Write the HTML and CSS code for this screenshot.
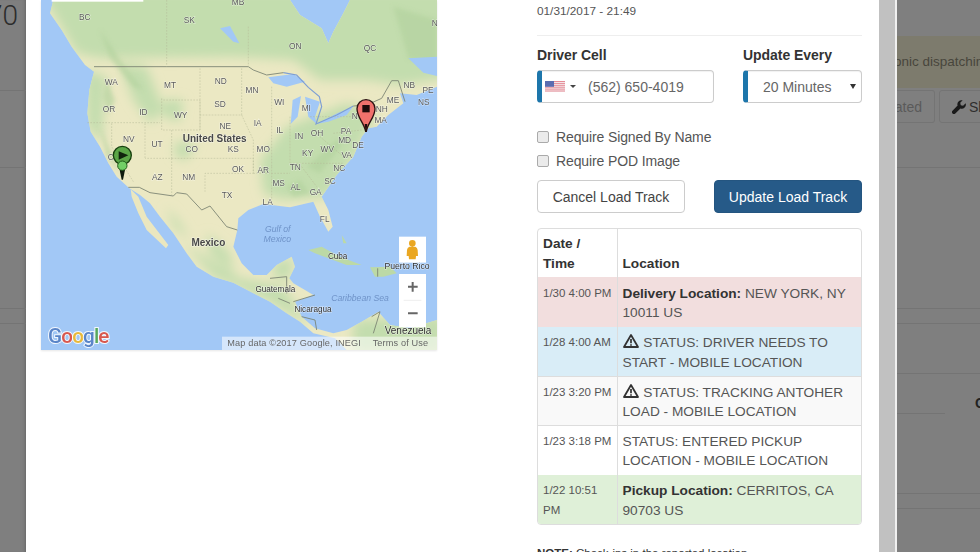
FILE: index.html
```html
<!DOCTYPE html>
<html lang="en">
<head>
<meta charset="utf-8">
<title>Load Track</title>
<link rel="stylesheet" href="styles.css">
</head>
<body>
<div class="page">
  <aside class="back back-left">
    <div class="big-num">70</div>
    <div class="rule r1"></div>
    <div class="rule r2"></div>
    <div class="rule r3"></div>
    <div class="rule r4"></div>
  </aside>

  <main class="modal">
    <section class="map">
      <svg class="map-svg" viewBox="123 0 1188 1050" width="396" height="350" aria-label="Map">
        <defs>
          <filter id="soft" x="-20%" y="-20%" width="140%" height="140%"><feGaussianBlur stdDeviation="6"/></filter>
          <filter id="softer" x="-20%" y="-20%" width="140%" height="140%"><feGaussianBlur stdDeviation="16"/></filter>
          <path id="land-shape" d="M160 0 L150 40 L185 90 L215 140 L255 195 L282 215 L268 270 L262 340 L272 395 L300 440 L325 490 L350 530 L388 565 L420 585 L450 610 L480 650 L520 700 L560 760 L590 800 L640 830 L700 848 L760 880 L810 905 L860 940 L900 965 L940 1000 L1005 1015 L1040 1050 L1311 1050 L1311 960 L1230 985 L1170 975 L1135 935 L1085 965 L1040 990 L1000 1000 L945 985 L905 950 L885 905 L940 885 L915 870 L880 850 L868 835 L885 800 L875 770 L830 795 L800 825 L760 825 L725 790 L700 740 L712 690 L715 655 L745 630 L790 612 L870 622 L940 605 L960 650 L985 695 L998 680 L985 630 L965 590 L1010 525 L1060 470 L1085 410 L1105 385 L1130 380 L1165 345 L1210 310 L1200 280 L1250 285 L1311 260 L1311 0 L1050 0 L1030 40 L1000 95 L985 130 L965 85 L900 45 L870 0 Z"/>
          <clipPath id="landclip"><use href="#land-shape"/></clipPath>
        </defs>
        <rect class="sea" x="123" y="0" width="1188" height="1050"/>
        <use href="#land-shape" class="land"/>
        <g clip-path="url(#landclip)">
          <g class="greens" filter="url(#softer)">
            <path d="M120 -30 H1340 V235 L1200 255 L1100 240 L960 240 L880 180 L700 170 L300 175 L230 160 Z"/>
            <path d="M360 190 L440 200 L490 330 L450 370 L400 300 Z"/>
            <path d="M255 210 L320 230 L310 350 L305 430 L262 380 Z"/>
            <path d="M780 480 L860 380 L1040 310 L1130 340 L1060 480 L985 590 L850 600 L790 580 Z"/>
            <path d="M490 300 L550 300 L540 365 L490 350 Z"/>
            <path d="M525 425 L590 430 L560 480 L525 470 Z"/>
            <path d="M550 730 L720 835 L850 860 L930 980 L800 900 L640 830 Z"/>
            <path d="M820 790 L880 770 L870 840 L820 830 Z"/>
            <path d="M1060 960 L1330 950 V1060 L1060 1060 Z"/>
            <path d="M500 620 L540 670 L570 720 L520 680 Z"/>
            <path d="M620 700 L690 760 L700 820 L630 760 Z"/>
          </g>
          <g class="mtn" filter="url(#soft)">
            <path d="M300 90 L355 170 L430 270 L400 260 L330 175 Z"/>
            <path d="M1180 20 L1311 60 L1311 190 L1225 175 Z"/>
            <path d="M320 240 L345 300 L325 340 L310 290 Z"/>
            <path d="M920 500 L1010 420 L1030 430 L960 520 Z"/>
            <path d="M860 560 L900 540 L930 580 L880 590 Z"/>
            <path d="M300 380 L335 460 L360 520 L320 470 Z"/>
          </g>
        </g>
        <!-- Baja and islands -->
        <path class="land-plain" d="M392 568 L415 590 L440 650 L505 735 L498 745 L440 690 L415 640 L395 590 Z"/>
        <path class="land-green" d="M925 750 L965 740 L1020 770 L1085 795 L1040 795 L985 775 L945 760 Z"/>
        <path class="land-green" d="M1110 802 L1170 800 L1190 820 L1150 830 L1125 830 Z"/>
        <path class="land-green" d="M1025 705 L1040 730 L1030 730 Z"/>
        <!-- lakes -->
        <path class="sea" d="M805 232 L880 222 L915 245 L860 260 L820 250 Z"/>
        <path class="sea" d="M878 300 L903 288 L893 350 L872 372 Z"/>
        <path class="sea" d="M915 290 L960 305 L945 350 L950 372 L925 350 Z"/>
        <path class="sea" d="M948 372 L1015 338 L1058 322 L1040 345 L985 365 Z"/>
        <path class="sea" d="M660 85 L690 78 L718 130 L700 125 Z"/>
        <path class="sea" d="M1225 175 L1311 170 L1311 228 L1270 218 Z"/>
        <!-- water borders -->
        <path class="water-border" d="M850 218 L890 225 L925 262 L958 290 L965 320 L948 372 L1010 345 L1060 318"/>
        <!-- land borders -->
        <g class="border">
          <path d="M282 200 H745 L760 210 L800 225 L850 218"/>
          <path d="M1060 318 L1100 315 L1145 295 L1175 242 L1195 242 L1215 305"/>
          <path d="M385 562 L418 562 L450 578 L520 588 L530 578 L560 582 L605 630 L630 618 L680 680 L712 690"/>
          <path d="M810 835 L860 830 L860 880 M835 895 L870 910 M880 905 L945 885 M905 950 L945 960 L950 990 M1115 950 L1140 935 L1120 1000 M1133 805 V830"/>
        </g>
        <g class="state">
          <path d="M500 0 V200 M745 80 V200 M262 368 H480 M335 370 V440 L400 545 M435 370 V475 M485 295 V390 H600 V300 H485 M515 390 V475 H435 M600 205 V390 M515 475 H760 V520 H615 V575 M515 475 V585 M725 205 V345 H600 M725 345 L760 420 V520 M815 260 V500 M815 500 V600 M870 350 V490 M760 520 H870 M870 490 H1030 M930 350 H1070 M1000 400 L1085 390 M905 500 L950 560 M960 410 L1030 470"/>
        </g>
        <!-- labels -->
        <g class="lbl">
          <text x="254" y="61">BC</text><text x="568" y="70">SK</text><text x="714" y="14">MB</text><text x="886" y="146">ON</text><text x="1110" y="152">QC</text><text x="1304" y="78">N</text>
          <text x="334" y="254">WA</text><text x="510" y="263">MT</text><text x="662" y="251">ND</text><text x="756" y="280">MN</text><text x="838" y="316">WI</text><text x="919" y="334">MI</text>
          <text x="327" y="335">OR</text><text x="430" y="345">ID</text><text x="542" y="355">WY</text><text x="660" y="321">SD</text><text x="676" y="387">NE</text><text x="773" y="377">IA</text><text x="839" y="400">IL</text><text x="897" y="417">IN</text><text x="951" y="408">OH</text><text x="1038" y="402">PA</text>
          <text x="386" y="426">NV</text><text x="471" y="440">UT</text><text x="575" y="455">CO</text><text x="700" y="455">KS</text><text x="790" y="457">MO</text><text x="923" y="469">KY</text><text x="982" y="455">WV</text><text x="1040" y="475">VA</text><text x="1034" y="428">MD</text><text x="1074" y="443">DE</text>
          <text x="472" y="540">AZ</text><text x="566" y="539">NM</text><text x="714" y="516">OK</text><text x="790" y="519">AR</text><text x="886" y="510">TN</text><text x="1018" y="513">NC</text><text x="990" y="553">SC</text>
          <text x="836" y="559">MS</text><text x="887" y="571">AL</text><text x="947" y="586">GA</text><text x="803" y="615">LA</text><text x="681" y="595">TX</text><text x="974" y="667">FL</text>
          <text x="1179" y="310">ME</text><text x="1228" y="263">NB</text><text x="1284" y="280">PE</text><text x="1271" y="315">NS</text><text x="1142" y="370">MA</text><text x="1145" y="335">NH</text><text x="1064" y="356">N</text><text x="332" y="481">C</text>
        </g>
        <g class="lbl-big">
          <text class="country" x="644" y="427">United States</text>
          <text class="country" x="625" y="738">Mexico</text>
          <text x="1013" y="777">Cuba</text>
          <text class="pr" x="1221" y="806">Puerto Rico</text>
          <text x="826" y="875">Guatemala</text>
          <text x="939" y="937">Nicaragua</text>
          <text class="ven" x="1224" y="1002">Venezuela</text>
        </g>
        <g class="lbl-sea">
          <text x="833" y="696">Gulf of</text>
          <text x="832" y="725">Mexico</text>
          <text x="1080" y="902">Caribbean Sea</text>
        </g>
        <!-- green pins -->
        <circle class="pin-g" cx="367" cy="466" r="27"/>
        <path class="glyph" d="M356 454 L385 466 L356 479 Z"/>
        <path class="pin-tail" d="M359 510 L375 510 L369 539 H365 Z"/>
        <circle class="pin-small" cx="367" cy="497" r="14"/>
        <!-- red pin -->
        <path class="pin-r" d="M1097 394 C1092 368 1071 352 1071 326 A27 27 0 0 1 1125 326 C1125 352 1103 368 1099 394 Z"/>
        <path class="pin-tip" d="M1094 372 H1102 L1099 396 H1097 Z"/>
        <rect class="glyph-r" x="1087" y="315" width="22" height="22"/>
        <!-- attribution -->
        <rect class="attr" x="666" y="1010" width="645" height="40"/>
        <text class="attr-t" x="682" y="1038">Map data ©2017 Google, INEGI</text>
        <text class="attr-t" x="1118" y="1038">Terms of Use</text>
        <!-- logo -->
        <text class="logo" x="144" y="1030"><tspan class="g-b">G</tspan><tspan class="g-r">o</tspan><tspan class="g-y">o</tspan><tspan class="g-b">g</tspan><tspan class="g-g">l</tspan><tspan class="g-r">e</tspan></text>
        <!-- top control -->
        <rect class="ctl" x="155" y="-10" width="275" height="15"/>
        <!-- pegman -->
        <rect class="ctl" x="1197" y="710" width="81" height="78"/>
        <path class="peg" d="M1237 720 A10 10 0 0 1 1237 740 A10 10 0 0 1 1237 720 M1228 740 H1246 Q1252 742 1253 750 L1254 768 H1248 L1247 778 H1227 L1226 768 H1220 L1221 750 Q1222 742 1228 740 Z"/>
        <!-- zoom -->
        <rect class="ctl" x="1197" y="822" width="81" height="160"/>
        <path class="sep" d="M1211 901 H1264"/>
        <path class="zoomi" d="M1224 860 H1253 M1238 846 V875 M1224 940 H1253"/>
      </svg>
    </section>

    <section class="form">
      <div class="stamp">01/31/2017 - 21:49</div>
      <hr class="divider">
      <div class="fields">
        <div class="field field-cell">
          <div class="field-label">Driver Cell</div>
          <div class="control">
            <svg class="flag" viewBox="0 0 20 11" width="20" height="11" aria-hidden="true">
              <rect width="20" height="11" fill="#e58b95"/>
              <path d="M0 1.6H20M0 3.7H20M0 5.8H20M0 7.9H20M0 10H20" stroke="#f6eef0" stroke-width="1"/>
              <rect width="9" height="5.8" fill="#5a6cb0"/>
            </svg>
            <span class="caret"></span>
            <span class="phone">(562) 650-4019</span>
          </div>
        </div>
        <div class="field field-every">
          <div class="field-label">Update Every</div>
          <div class="control control-select">
            <span class="select-val">20 Minutes</span>
            <span class="select-arrow"></span>
          </div>
        </div>
      </div>
      <label class="check"><span class="box"></span>Require Signed By Name</label>
      <label class="check"><span class="box"></span>Require POD Image</label>
      <div class="actions">
        <button class="btn btn-default">Cancel Load Track</button>
        <button class="btn btn-primary">Update Load Track</button>
      </div>
      <div class="table-wrap">
        <table class="track">
          <thead>
            <tr><th class="c-date">Date / Time</th><th>Location</th></tr>
          </thead>
          <tbody>
            <tr class="danger"><td class="c-date">1/30 4:00 PM</td><td><b>Delivery Location:</b> NEW YORK, NY 10011 US</td></tr>
            <tr class="info"><td class="c-date">1/28 4:00 AM</td><td><svg class="warn" viewBox="0 0 16 14" width="16" height="14" aria-hidden="true"><path d="M8 1 L15 13 H1 Z" fill="none" stroke="#333" stroke-width="1.8" stroke-linejoin="round"/><path d="M8 5 V9.2 M8 10.2 V11.8" stroke="#333" stroke-width="1.7"/></svg> STATUS: DRIVER NEEDS TO START - MOBILE LOCATION</td></tr>
            <tr class="muted"><td class="c-date">1/23 3:20 PM</td><td><svg class="warn" viewBox="0 0 16 14" width="16" height="14" aria-hidden="true"><path d="M8 1 L15 13 H1 Z" fill="none" stroke="#333" stroke-width="1.8" stroke-linejoin="round"/><path d="M8 5 V9.2 M8 10.2 V11.8" stroke="#333" stroke-width="1.7"/></svg> STATUS: TRACKING ANTOHER LOAD - MOBILE LOCATION</td></tr>
            <tr><td class="c-date">1/23 3:18 PM</td><td>STATUS: ENTERED PICKUP LOCATION - MOBILE LOCATION</td></tr>
            <tr class="success"><td class="c-date">1/22 10:51 PM</td><td><b>Pickup Location:</b> CERRITOS, CA 90703 US</td></tr>
          </tbody>
        </table>
      </div>
      <p class="note"><b>NOTE:</b> Check-ins in the reported location</p>
    </section>
  </main>

  <div class="scroll"></div>

  <aside class="back back-right">
    <div class="alert">onic dispatching</div>
    <div class="tools">
      <span class="tool tool-a">ated</span>
      <span class="tool tool-b">
        <svg class="wrench" viewBox="0 0 16 16" width="14" height="14" aria-hidden="true"><path d="M15.6 3.7 L12.7 6.5 L10 5.9 L9.4 3.2 L12.2 .4 A4.7 4.7 0 0 0 6.4 6.4 L.6 12.2 A2.2 2.2 0 0 0 3.8 15.4 L9.6 9.6 A4.7 4.7 0 0 0 15.6 3.7 Z" fill="#1a1a1a"/></svg>
        Show
      </span>
    </div>
    <div class="rule rr1"></div>
    <div class="rule rr2"></div>
    <div class="rule rr3"></div>
    <div class="rule rr4"></div>
    <div class="mark">C</div>
    <div class="rule rr5"></div>
    <div class="rule rr6"></div>
    <div class="rule rr7"></div>
  </aside>
</div>
</body>
</html>
```
FILE: styles.css
```css
* { box-sizing: border-box; }
html, body { margin: 0; padding: 0; }
body {
  width: 980px;
  height: 552px;
  overflow: hidden;
  font-family: "Liberation Sans", Arial, sans-serif;
  font-size: 14px;
  color: #333;
  background: #7f7f7f;
}
.page {
  display: grid;
  grid-template-columns: 26px 853px 18px 83px;
  height: 552px;
  overflow: hidden;
}

/* dimmed page behind the modal */
.back { overflow: hidden; background: #7f7f7f; height: 552px; min-width: 0; }
.rule { height: 1px; background: #747474; }
.back-left { box-shadow: inset -3px 0 3px -2px #666; }
.big-num {
  height: 90px;
  margin-left: -13px;
  padding-top: 1px;
  font-family: Roboto, "Liberation Sans", sans-serif;
  font-weight: 300;
  font-size: 28px;
  line-height: 30px;
  color: #2c2c2c;
  white-space: nowrap;
}
.back-left .r2 { margin-top: 76px; }
.back-left .r3 { margin-top: 140px; }
.back-left .r4 { margin-top: 14px; }

.alert {
  height: 52px;
  margin-top: 36px;
  padding-top: 17px;
  margin-left: -3px;
  background: #7d7b6d;
  color: #48463c;
  white-space: nowrap;
  font-size: 13.5px;
  line-height: 17px;
  overflow: hidden;
}
.tools { display: flex; height: 33px; margin-top: 2px; margin-left: -12px; gap: 4px; }
.tool {
  display: flex;
  align-items: center;
  gap: 3px;
  height: 33px;
  flex: none;
  border: 1px solid #747474;
  border-radius: 3px;
  padding: 0 12px 0 0;
  color: #5a5a5a;
  white-space: nowrap;
}
.tool-a { width: 50px; justify-content: flex-end; border-left: 0; border-radius: 0 3px 3px 0; }
.tool-b { width: 80px; color: #2e2e2e; padding-left: 12px; }
.rr1 { margin-top: 44px; }
.rr2 { margin-top: 140px; }
.rr3 { margin-top: 14px; }
.rr4 { margin-top: 49px; }
.mark {
  margin-top: 20px;
  margin-left: 78px;
  height: 19px;
  line-height: 19px;
  font-size: 14px;
  font-weight: bold;
  color: #222;
}
.rr5 { width: 48px; }
.rr6 { margin-top: 79px; }
.rr7 { margin-top: 14px; }

/* modal */
.modal {
  display: flex;
  align-items: flex-start;
  background: #fff;
  height: 552px;
  padding-left: 15px;
  overflow: hidden;
}
.map {
  flex: 0 0 396px;
  height: 350px;
  box-shadow: 0 1px 2px rgba(0,0,0,.1);
}
.map-svg { display: block; filter: blur(.35px); }
.sea { fill: #a2c8f6; }
.land { fill: #ebe8c3; }
.land-plain { fill: #ebe7bf; }
.land-green { fill: #bcd9a6; }
.greens path { fill: #c3ddae; }
.mtn path { fill: #b0d09c; opacity: .6; }
.water-border { fill: none; stroke: #7d9ed4; stroke-width: 3.5; }
.border path { fill: none; stroke: #7a8272; stroke-width: 2.6; }
.state path { fill: none; stroke: #b4b896; stroke-width: 1.5; stroke-dasharray: 5 4; }
.lbl text {
  font: 25px "Liberation Sans", Arial, sans-serif;
  fill: #5a5a5a;
  text-anchor: middle;
  paint-order: stroke;
  stroke: rgba(255,255,255,.5);
  stroke-width: 3px;
}
.lbl-big text {
  font: 24.5px "Liberation Sans", Arial, sans-serif;
  fill: #2f2f2f;
  text-anchor: middle;
  paint-order: stroke;
  stroke: rgba(255,255,255,.6);
  stroke-width: 3px;
}
.lbl-big .country { font-size: 30px; font-weight: bold; fill: #484848; }
.lbl-big .pr { font-size: 26px; }
.lbl-big .ven { font-size: 30px; }
.lbl-sea text {
  font: italic 26px "Liberation Sans", Arial, sans-serif;
  fill: #6f93c8;
  text-anchor: middle;
}
.pin-g { fill: #5ba647; stroke: #17400f; stroke-width: 4; }
.glyph { fill: #10240d; }
.pin-tail { fill: #0e1a0c; }
.pin-small { fill: #72cf66; stroke: #1f5a18; stroke-width: 3; }
.pin-r { fill: #f0716c; stroke: #2c1212; stroke-width: 4; }
.pin-tip { fill: #1e0b0b; }
.glyph-r { fill: #1e0b0b; }
.attr { fill: rgba(255,255,255,.55); }
.attr-t { font: 27.5px "Liberation Sans", Arial, sans-serif; fill: #666; letter-spacing: .4px; }
.logo {
  font: 500 62px Roboto, "Liberation Sans", sans-serif;
  paint-order: stroke;
  stroke: rgba(255,255,255,.85);
  stroke-width: 6px;
  letter-spacing: -2.5px;
}
.g-b { fill: #5a85c8; }
.g-r { fill: #d8584f; }
.g-y { fill: #e8b93a; }
.g-g { fill: #58a85c; }
.ctl { fill: #fff; }
.peg { fill: #eaa722; }
.sep { stroke: #e6e6e6; stroke-width: 2; fill: none; }
.zoomi { stroke: #666; stroke-width: 6; fill: none; }

/* form */
.form {
  flex: 0 0 325px;
  margin-left: 100px;
}
.stamp {
  height: 35px;
  padding-top: 4px;
  font-size: 11.8px;
  line-height: 14px;
  color: #555;
}
.divider { border: 0; border-top: 1px solid #eee; margin: 0 0 11px; }
.fields { display: flex; justify-content: space-between; }
.field-cell { width: 177px; }
.field-every { width: 119px; }
.field-label {
  height: 23px;
  font-weight: bold;
  font-size: 14px;
  line-height: 16px;
  color: #333;
  letter-spacing: -.05px;
}
.control {
  display: flex;
  align-items: center;
  height: 33px;
  border: 1px solid #ccc;
  border-left: 5px solid #1d76ab;
  border-radius: 4px;
  background: #fff;
  box-shadow: inset 0 1px 1px rgba(0,0,0,.06);
  padding-left: 3px;
  color: #666;
}
.flag { flex: none; }
.caret {
  width: 0;
  height: 0;
  margin-left: 5px;
  border-top: 3px solid #444;
  border-left: 3px solid transparent;
  border-right: 3px solid transparent;
}
.phone { margin-left: 12px; }
.control-select { padding-left: 15px; }
.select-arrow {
  margin-left: auto;
  margin-right: 5px;
  width: 0;
  height: 0;
  border-top: 5px solid #333;
  border-left: 3px solid transparent;
  border-right: 3px solid transparent;
}
.check {
  display: flex;
  align-items: center;
  height: 24px;
  color: #555;
  letter-spacing: -.12px;
}
.check .box {
  flex: none;
  width: 12px;
  height: 12px;
  margin-right: 7px;
  border: 1px solid #aaa;
  border-radius: 2px;
  background: #ebebeb;
}
.fields + .check { margin-top: 22px; }
.actions { display: flex; justify-content: space-between; margin-top: 7px; }
.btn {
  height: 33px;
  width: 148px;
  border-radius: 4px;
  border: 1px solid #ccc;
  font: 14px "Liberation Sans", Arial, sans-serif;
  padding: 0;
}
.btn-default { background: #fff; color: #444; }
.btn-primary { background: #265a88; border-color: #245580; color: #fff; }
.table-wrap {
  margin-top: 15px;
  border: 1px solid #ddd;
  border-radius: 4px;
  overflow: hidden;
}
.track { width: 100%; border-collapse: collapse; table-layout: fixed; font-size: 13.7px; }
.track th, .track td {
  padding: 5px;
  line-height: 19.4px;
  text-align: left;
  vertical-align: bottom;
  color: #333;
}
.track td {
  vertical-align: top;
  color: #555;
  border-top: 1px solid #ddd;
  padding-top: 5.6px;
  padding-bottom: 4px;
}
.track thead th { height: 48px; padding-bottom: 4px; line-height: 19.6px; }
.track .c-date { width: 79px; border-right: 1px solid #ddd; }
.track td.c-date { font-size: 11.5px; padding-right: 0; }
.track b { color: #333; }
.warn { vertical-align: -1px; margin-right: 1px; }
.danger td { background: #f2dede; border-top-color: #f2dede; }
.info td { background: #d9edf7; border-top-color: #d9edf7; }
.muted td { background: #f9f9f9; }
.success td { background: #dff0d8; border-top-color: #dff0d8; }
.note { margin: 20px 0 0; font-size: 11.5px; line-height: 17px; color: #333; white-space: nowrap; }

/* scrollbar strip */
.scroll {
  background: #c1c1c1;
  border-right: 2px solid #f0f0f0;
  height: 552px;
}
```
